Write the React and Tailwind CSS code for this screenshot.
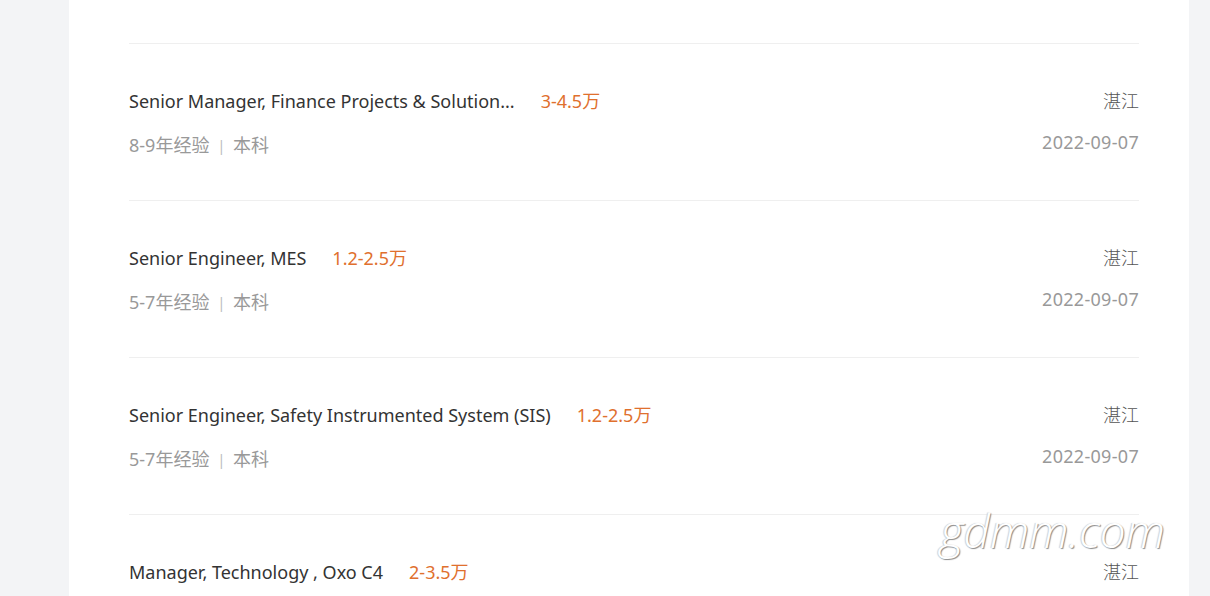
import React from 'react';

const jobs = [
  { title: 'Senior Manager, Finance Projects & Solution...', salary: '3-4.5万', exp: '8-9年经验', edu: '本科', city: '湛江', date: '2022-09-07' },
  { title: 'Senior Engineer, MES', salary: '1.2-2.5万', exp: '5-7年经验', edu: '本科', city: '湛江', date: '2022-09-07' },
  { title: 'Senior Engineer, Safety Instrumented System (SIS)', salary: '1.2-2.5万', exp: '5-7年经验', edu: '本科', city: '湛江', date: '2022-09-07' },
  { title: 'Manager, Technology , Oxo C4', salary: '2-3.5万', exp: '5-7年经验', edu: '本科', city: '湛江', date: '2022-09-07' },
];

const font = { fontFamily: '"Noto Sans", "Noto Sans CJK SC", sans-serif' };

const JobRow = ({ job }) => (
  <div className="flex justify-between border-t border-[#efefef] pt-[45px] pb-[43px]">
    <div className="flex flex-col">
      <div className="flex items-center h-6 whitespace-nowrap">
        <span className="text-[18px] text-[#333333]">{job.title}</span>
        <span className="ml-[26px] text-[18px] text-[#e0702e]">{job.salary}</span>
      </div>
      <div className="flex items-center h-6 mt-5 text-[18px] text-[#999999]">
        <span>{job.exp}</span>
        <span className="mx-[8px] text-[14px] text-[#bbbbbb]">|</span>
        <span>{job.edu}</span>
      </div>
    </div>
    <div className="flex flex-col items-end">
      <div className="h-6 flex items-center text-[18px] font-light text-[#555555]">{job.city}</div>
      <div className="h-6 flex items-center mt-[17px] text-[18px] tracking-[0.3px] text-[#999999]">{job.date}</div>
    </div>
  </div>
);

const App = () => {
  return (
    <div className="min-h-screen h-[596px] overflow-hidden bg-[#f3f4f6]" style={font}>
      <div className="relative ml-[69px] w-[1120px] h-full bg-white pl-[60px] pr-[50px] pt-[43px]">
        {jobs.map((job, i) => (
          <JobRow key={i} job={job} />
        ))}
        {/* watermark */}
        <div
          className="absolute left-[871px] top-[496px] text-[46px] italic font-light text-white"
          style={{ fontFamily: '"Open Sans", sans-serif', textShadow: '1px 1px 1px #8a8a8a, -1px 0 1px #d0d0d0' }}
        >
          gdmm.com
        </div>
      </div>
    </div>
  );
};

export default App;
